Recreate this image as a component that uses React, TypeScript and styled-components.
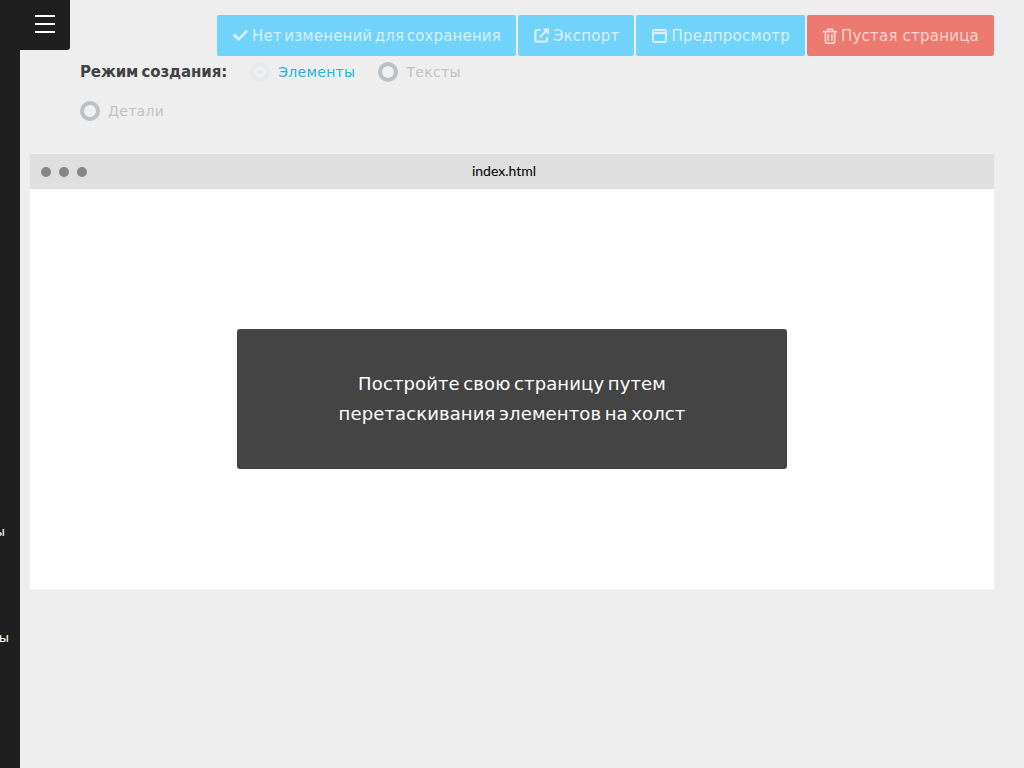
import React from "react";
import styled, { createGlobalStyle } from "styled-components";
import { FaCheck } from "react-icons/fa";

const Global = createGlobalStyle`
  html, body { margin: 0; padding: 0; height: 100%; background: #eeeeee; }
  #root { height: 100%; }
  * { box-sizing: border-box; }
  body { font-family: "DejaVu Sans", sans-serif; }
`;

const Page = styled.div`
  display: flex;
  width: 1024px;
  height: 768px;
  overflow: hidden;
  position: relative;
`;

const Sidebar = styled.aside`
  width: 20px;
  flex: none;
  background: #1f1f1f;
  overflow: hidden;
  padding-top: 522px;
  display: flex;
  flex-direction: column;
  gap: 86px;
`;

const SideLabel = styled.div<{ $shift: number }>`
  height: 20px;
  line-height: 20px;
  width: 100px;
  margin-left: -${(p) => p.$shift}px;
  text-align: right;
  color: #fff;
  font-size: 13px;
  white-space: nowrap;
`;

const Toggle = styled.button`
  position: absolute;
  left: 20px;
  top: 0;
  width: 50px;
  height: 50px;
  border: 0;
  background: #1f1f1f;
  border-radius: 0 0 3px 0;
  display: flex;
  flex-direction: column;
  gap: 6px;
  align-items: center;
  padding: 15px 0 0 0;
`;

const Bar = styled.span`
  display: block;
  width: 20px;
  height: 2px;
  background: #fff;
`;

const Main = styled.main`
  flex: 1;
  padding: 15px 30px 0 10px;
  min-width: 0;
`;

const Toolbar = styled.div`
  display: flex;
  justify-content: flex-end;
  gap: 2px;
`;

const Button = styled.button<{ $danger?: boolean; $ws: number; $ls: number }>`
  height: 41px;
  border: 0;
  border-radius: 2px;
  padding: 0 15px 0 16px;
  background: ${(p) => (p.$danger ? "#ec7a70" : "#72d3fa")};
  color: ${(p) => (p.$danger ? "#fad4d0" : "#d3f0fc")};
  font-family: "DejaVu Sans", sans-serif;
  letter-spacing: ${(p) => p.$ls}px;
  word-spacing: ${(p) => p.$ws}px;
  font-size: 15px;
  white-space: nowrap;
  display: flex;
  align-items: center;
  gap: 4px;
  svg { flex: none; }
`;

const Mode = styled.div`
  display: flex;
  flex-wrap: wrap;
  width: 420px;
  margin-left: 50px;
  margin-top: 6px;
  align-items: center;
  row-gap: 19px;
`;

const ModeLabel = styled.div`
  font-weight: 700;
  color: #414141;
  font-size: 15px;
  letter-spacing: -0.12px;
  word-spacing: -1.8px;
  line-height: 20px;
  margin-right: 23px;
`;

const Option = styled.label<{ $on?: boolean }>`
  display: flex;
  align-items: center;
  gap: 8px;
  font-size: 14px;
  letter-spacing: 0.3px;
  line-height: 20px;
  margin-right: 23px;
  color: ${(p) => (p.$on ? "#1fb5dc" : "#bfc3c6")};
`;

const Radio = styled.span<{ $on?: boolean }>`
  width: 20px;
  height: 20px;
  border-radius: 50%;
  flex: none;
  display: flex;
  align-items: center;
  justify-content: center;
  border: 4px solid ${(p) => (p.$on ? "#e6e8e9" : "#bdc1c5")};
  background: #eef0f1;
  &::after {
    content: "";
    width: 4px;
    height: 4px;
    border-radius: 50%;
    background: ${(p) => (p.$on ? "#e6e8e9" : "transparent")};
  }
`;

const Browser = styled.section`
  margin-top: 33px;
`;

const BrowserHead = styled.header`
  height: 35px;
  background: #dfdfdf;
  display: flex;
  align-items: center;
  position: relative;
  justify-content: center;
  font-family: Lato, sans-serif;
  font-size: 14px;
  color: #000;
  padding: 0 16px 2px 0;
`;

const Dots = styled.div`
  position: absolute;
  left: 11px;
  top: 13px;
  display: flex;
  gap: 8px;
`;

const Dot = styled.span`
  width: 10px;
  height: 10px;
  border-radius: 50%;
  background: #858585;
`;

const Canvas = styled.div`
  height: 400px;
  background: #fff;
  display: flex;
  align-items: center;
  justify-content: center;
  padding-top: 20px;
`;

const Message = styled.div`
  width: 550px;
  height: 140px;
  background: #444;
  border-radius: 3px;
  color: #fff;
  font-size: 18px;
  letter-spacing: 0.12px;
  word-spacing: -2.3px;
  line-height: 30px;
  display: flex;
  align-items: center;
  justify-content: center;
  text-align: center;
  padding: 0 100px;
`;

const ExportIcon = () => (
  <svg width="15" height="15" viewBox="0 0 15 15" fill="none" stroke="currentColor" strokeWidth="2.2">
    <path d="M13 9v3a1.6 1.6 0 0 1-1.6 1.6H3a1.6 1.6 0 0 1-1.6-1.6V3.6A1.6 1.6 0 0 1 3 2h3.5" />
    <path d="M5.8 9.2 12.5 2.5" />
    <path d="M8.5 .5H15v6.5z" fill="currentColor" stroke="none" />
  </svg>
);

const WindowIcon = () => (
  <svg width="15" height="15" viewBox="0 0 15 15" fill="none" stroke="currentColor" strokeWidth="2">
    <rect x="1" y="2" width="13" height="12" rx="1.2" />
    <path d="M1 5h13" strokeWidth="2.4" />
  </svg>
);

const TrashIcon = () => (
  <svg width="14" height="16" viewBox="0 0 14 16" fill="none" stroke="currentColor" strokeWidth="1.7">
    <path d="M0 3.6h14" />
    <path d="M4.6 3.2V1.4h4.8v1.8" />
    <path d="M2.4 3.6v10.2a1.4 1.4 0 0 0 1.4 1.4h6.4a1.4 1.4 0 0 0 1.4-1.4V3.6" />
    <path d="M5.2 6v7M8.8 6v7" />
  </svg>
);

export default function App() {
  return (
    <>
      <Global />
      <Page>
        <Sidebar>
          <SideLabel $shift={95}>Элементы</SideLabel>
          <SideLabel $shift={91}>Страницы</SideLabel>
        </Sidebar>
        <Toggle aria-label="menu">
          <Bar />
          <Bar />
          <Bar />
        </Toggle>
        <Main>
          <Toolbar>
            <Button $ls={0.14} $ws={-2.3}><FaCheck size={15} />Нет изменений для сохранения</Button>
            <Button $ls={0.22} $ws={0}><ExportIcon />Экспорт</Button>
            <Button $ls={0.22} $ws={0}><WindowIcon />Предпросмотр</Button>
            <Button $danger $ls={0.22} $ws={-0.1}><TrashIcon />Пустая страница</Button>
          </Toolbar>
          <Mode>
            <ModeLabel>Режим создания:</ModeLabel>
            <Option $on><Radio $on />Элементы</Option>
            <Option><Radio />Тексты</Option>
            <Option><Radio />Детали</Option>
          </Mode>
          <Browser>
            <BrowserHead>
              <Dots><Dot /><Dot /><Dot /></Dots>
              index.html
            </BrowserHead>
            <Canvas>
              <Message>Постройте свою страницу путем перетаскивания элементов на холст</Message>
            </Canvas>
          </Browser>
        </Main>
      </Page>
    </>
  );
}
